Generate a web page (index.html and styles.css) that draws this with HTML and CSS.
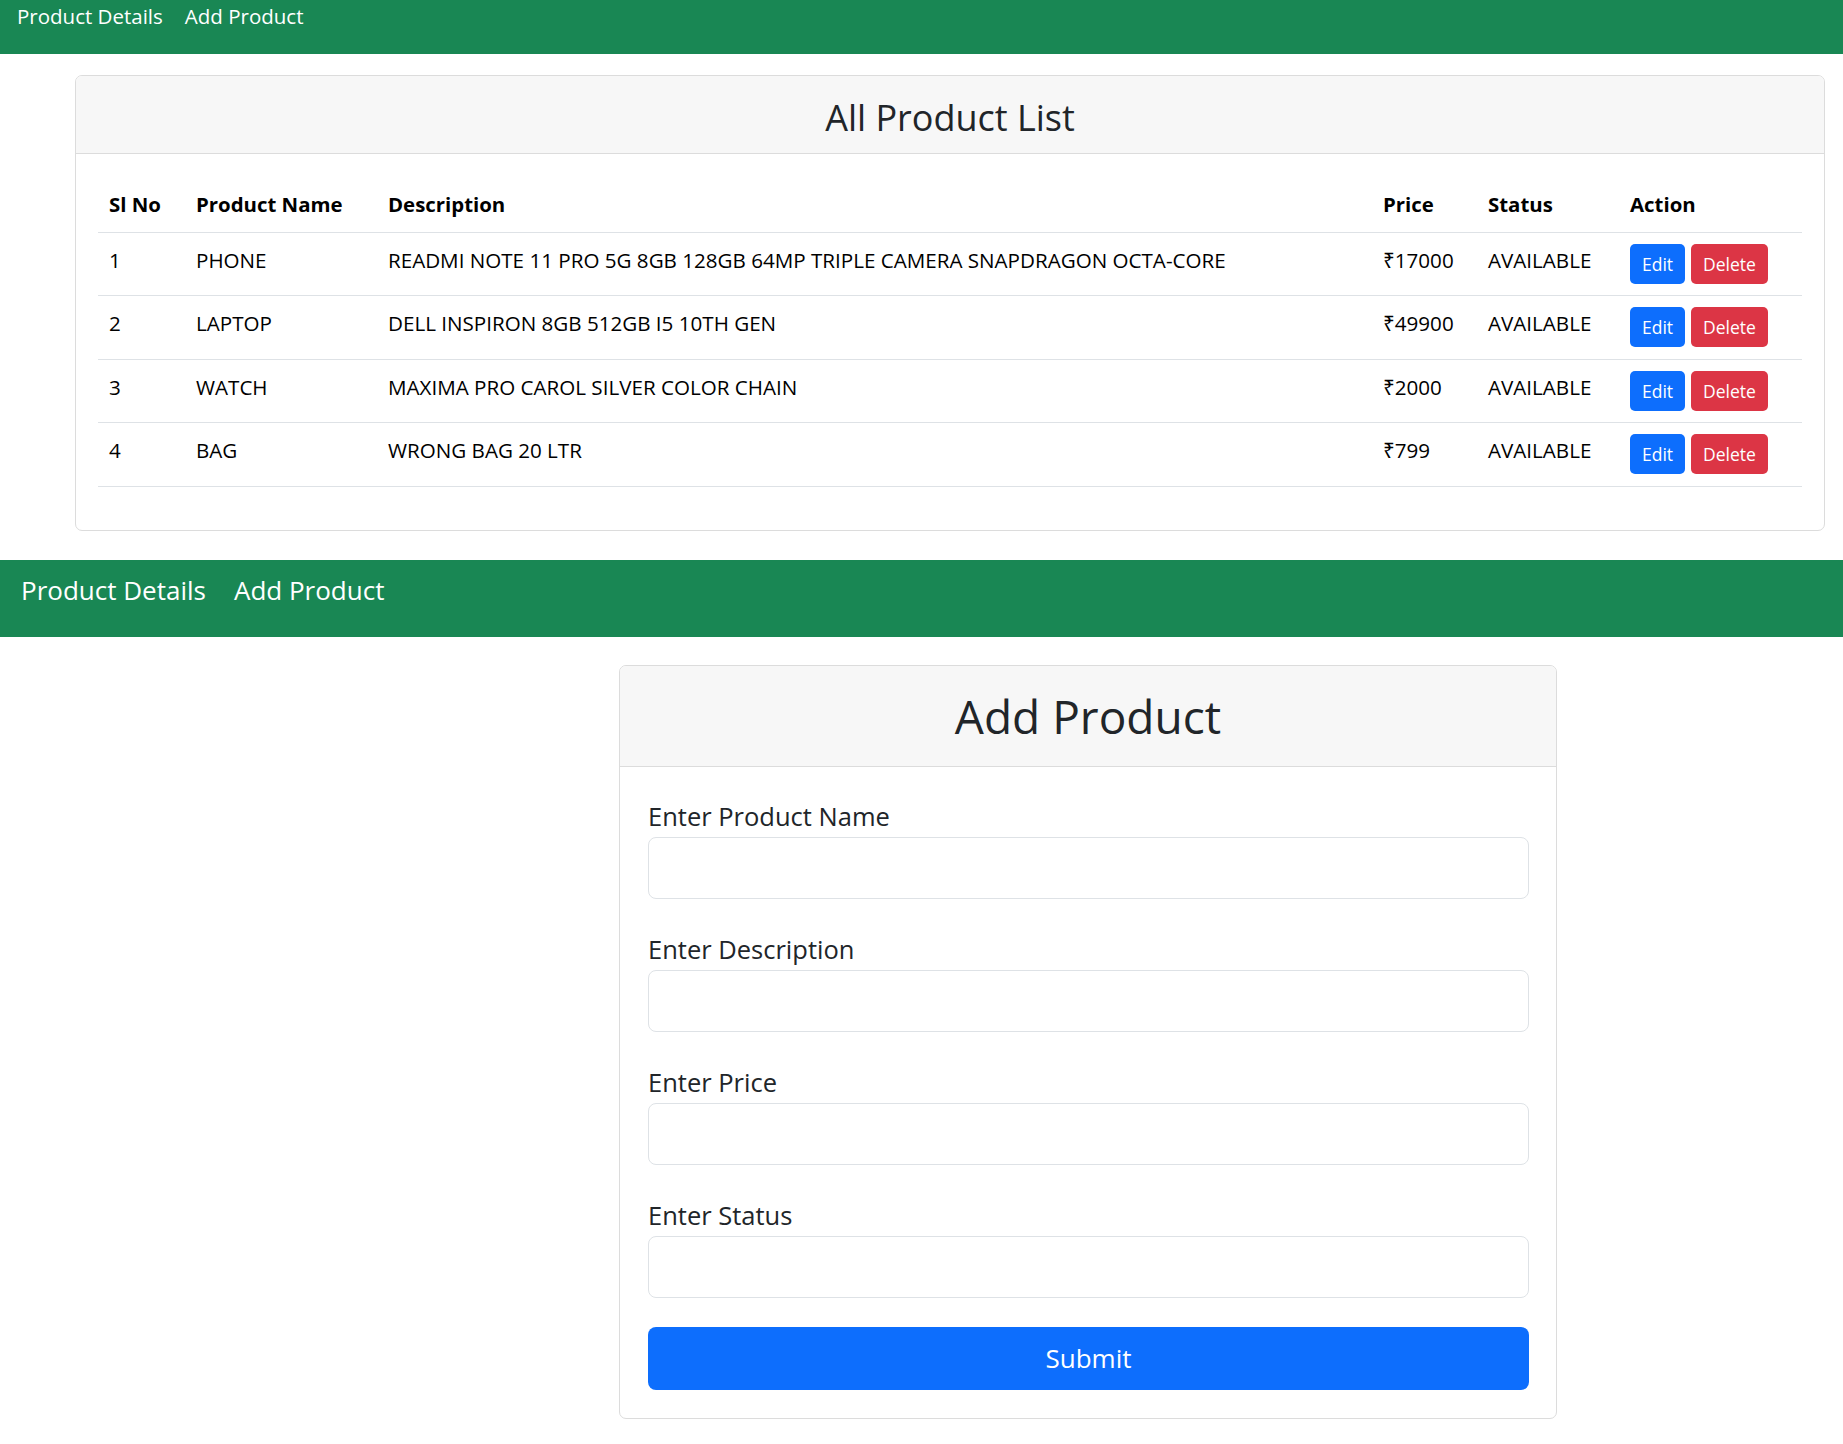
FILE: index.html
```html
<!DOCTYPE html>
<html lang="en">
<head>
<meta charset="utf-8">
<title>Products</title>
<link rel="stylesheet" href="styles.css">
</head>
<body>
<nav class="topnav">
  <a class="topnav-link" href="#">Product Details</a>
  <a class="topnav-link" href="#">Add Product</a>
</nav>

<section class="card list-card">
  <div class="card-header">
    <h3 class="list-title">All Product List</h3>
  </div>
  <div class="card-body list-body">
    <table class="product-table">
      <colgroup>
        <col class="c-sl"><col class="c-name"><col class="c-desc"><col class="c-price"><col class="c-status"><col class="c-action">
      </colgroup>
      <thead>
        <tr><th>Sl No</th><th>Product Name</th><th>Description</th><th>Price</th><th>Status</th><th>Action</th></tr>
      </thead>
      <tbody>
        <tr><td>1</td><td>PHONE</td><td>READMI NOTE 11 PRO 5G 8GB 128GB 64MP TRIPLE CAMERA SNAPDRAGON OCTA-CORE</td><td>₹17000</td><td>AVAILABLE</td><td><div class="actions"><button class="btn btn-edit">Edit</button><button class="btn btn-delete">Delete</button></div></td></tr>
        <tr><td>2</td><td>LAPTOP</td><td>DELL INSPIRON 8GB 512GB I5 10TH GEN</td><td>₹49900</td><td>AVAILABLE</td><td><div class="actions"><button class="btn btn-edit">Edit</button><button class="btn btn-delete">Delete</button></div></td></tr>
        <tr><td>3</td><td>WATCH</td><td>MAXIMA PRO CAROL SILVER COLOR CHAIN</td><td>₹2000</td><td>AVAILABLE</td><td><div class="actions"><button class="btn btn-edit">Edit</button><button class="btn btn-delete">Delete</button></div></td></tr>
        <tr><td>4</td><td>BAG</td><td>WRONG BAG 20 LTR</td><td>₹799</td><td>AVAILABLE</td><td><div class="actions"><button class="btn btn-edit">Edit</button><button class="btn btn-delete">Delete</button></div></td></tr>
      </tbody>
    </table>
  </div>
</section>

<nav class="brandnav">
  <a class="brandnav-link" href="#">Product Details</a>
  <a class="brandnav-link" href="#">Add Product</a>
</nav>

<section class="card form-card">
  <div class="card-header form-header">
    <h2 class="form-title">Add Product</h2>
  </div>
  <form class="card-body form-body">
    <div class="field">
      <label class="field-label">Enter Product Name</label>
      <input class="field-input" type="text">
    </div>
    <div class="field">
      <label class="field-label">Enter Description</label>
      <input class="field-input" type="text">
    </div>
    <div class="field">
      <label class="field-label">Enter Price</label>
      <input class="field-input" type="text">
    </div>
    <div class="field">
      <label class="field-label">Enter Status</label>
      <input class="field-input" type="text">
    </div>
    <button class="submit-btn" type="button">Submit</button>
  </form>
</section>
</body>
</html>
```

FILE: styles.css
```css
* { box-sizing: border-box; }

html, body {
  margin: 0;
  padding: 0;
  background: #fff;
}

body {
  font-family: "Open Sans", "Noto Sans", sans-serif;
  color: #212529;
  padding-bottom: 24px;
}

/* top navigation */
.topnav {
  height: 54px;
  background: #198754;
  display: flex;
  gap: 22px;
  padding: 1px 0 0 17px;
}
.topnav-link {
  color: #fff;
  text-decoration: none;
  font-size: 20.5px;
  line-height: 31px;
}

/* cards */
.card {
  border: 1px solid #dcdcdc;
  border-radius: 7px;
  background: #fff;
  overflow: hidden;
}
.card-header {
  background: #f7f7f7;
  border-bottom: 1px solid #dcdcdc;
  text-align: center;
}

.list-card {
  margin: 21px 18px 0 75px;
}
.list-card .card-header {
  height: 78px;
  padding-top: 20px;
}
.list-title {
  margin: 0;
  font-size: 36px;
  font-weight: 400;
  line-height: 43px;
  color: #212529;
}
.list-body {
  padding: 22px 22px 21px 22px;
}

.product-table {
  width: 100%;
  border-collapse: collapse;
  table-layout: fixed;
  margin-bottom: 22px;
  color: #000;
}
.c-sl { width: 87px; }
.c-name { width: 192px; }
.c-desc { width: 995px; }
.c-price { width: 105px; }
.c-status { width: 142px; }
.c-action { width: 183px; }

.product-table th,
.product-table td {
  text-align: left;
  vertical-align: top;
  padding: 11.25px 11px;
  line-height: 33px;
  font-size: 20.6px;
  border-bottom: 1px solid #dee2e6;
  white-space: nowrap;
}
.product-table th {
  font-weight: 700;
  font-size: 20.4px;
  padding-top: 12px;
  padding-bottom: 10.5px;
}
.product-table td {
  font-weight: 400;
}

.actions {
  display: flex;
  gap: 6px;
}
.btn {
  height: 40px;
  border: none;
  border-radius: 5px;
  color: #fff;
  font-family: "Open Sans", "Noto Sans", sans-serif;
  font-size: 17.5px;
  padding: 0 12px;
  line-height: 40px;
  cursor: pointer;
}
.btn-edit { background: #0d6efd; }
.btn-delete { background: #dc3545; }

/* second nav */
.brandnav {
  height: 77px;
  margin-top: 29px;
  background: #198754;
  display: flex;
  gap: 28px;
  padding: 11px 0 0 21px;
}
.brandnav-link {
  color: #fff;
  text-decoration: none;
  font-size: 26px;
  line-height: 39px;
}

/* form card */
.form-card {
  width: 938px;
  margin: 28px 0 0 619px;
}
.form-header {
  height: 101px;
  padding-top: 23px;
}
.form-title {
  margin: 0;
  font-size: 46px;
  font-weight: 400;
  line-height: 55px;
  color: #212529;
}
.form-body {
  display: flex;
  flex-direction: column;
  gap: 32px;
  padding: 31px 27px 28px 28px;
}
.field {
  display: flex;
  flex-direction: column;
}
.field-label {
  font-size: 25.5px;
  line-height: 36px;
  margin-bottom: 3px;
  color: #212529;
}
.field-input {
  height: 62px;
  border: 1px solid #dee2e6;
  border-radius: 8px;
  background: #fff;
  font-size: 22px;
  padding: 0 16px;
  font-family: inherit;
}
.submit-btn {
  margin-top: -3px;
  height: 63px;
  border: none;
  border-radius: 8px;
  background: #0d6efd;
  color: #fff;
  font-family: "Open Sans", "Noto Sans", sans-serif;
  font-size: 26px;
  cursor: pointer;
}
```
